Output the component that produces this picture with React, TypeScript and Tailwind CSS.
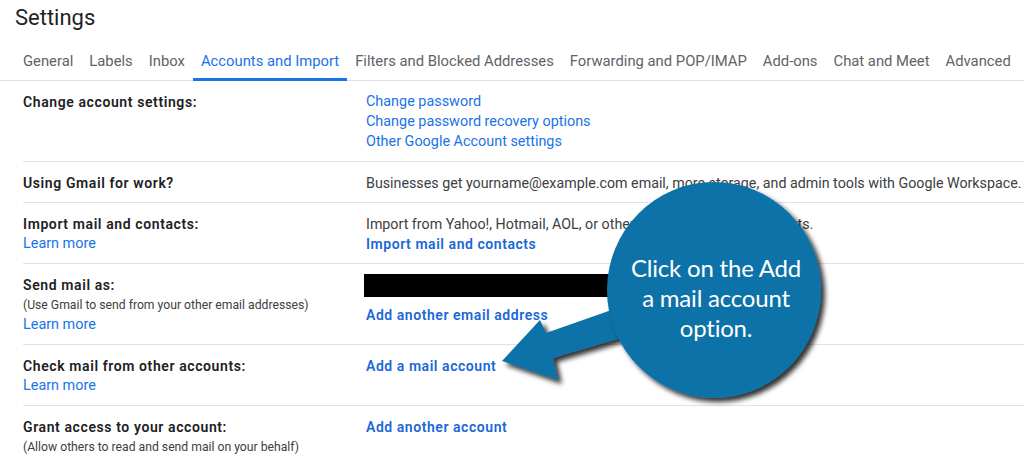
import React from "react";

const tabs = [
  "General",
  "Labels",
  "Inbox",
  "Accounts and Import",
  "Filters and Blocked Addresses",
  "Forwarding and POP/IMAP",
  "Add-ons",
  "Chat and Meet",
  "Advanced",
];

function Row({ left, right }: { left: React.ReactNode; right: React.ReactNode }) {
  return (
    <div className="flex border-b border-[#e3e3e3] pt-[11px] pb-[9px]">
      <div className="w-[343px] shrink-0">{left}</div>
      <div className="flex-1">{right}</div>
    </div>
  );
}

const label = "text-[14px] leading-5 font-semibold tracking-[0.6px] text-[#202124]";
const link = "block text-[14.4px] leading-5 text-[#1a73e8]";
const boldLink = "block text-[14px] leading-5 font-semibold tracking-[0.55px] text-[#1a67d8]";
const small = "text-[12.2px] leading-5 text-[#3c4043]";
const body = "text-[14.25px] leading-5 text-[#3c4043]";

export default function App() {
  return (
    <div className="relative w-[1024px] h-[456px] overflow-hidden bg-white font-['Roboto','Liberation_Sans',sans-serif]">
      <h1 className="pl-[15px] pt-1 text-[22px] leading-[28px] text-[#1f1f1f]">Settings</h1>

      {/* Tabs */}
      <div className="mt-[9px] flex border-b border-[#e3e3e3] pl-[15px]">
        {tabs.map((t) => (
          <div
            key={t}
            className={`-mb-px px-2 pt-[10px] pb-[7px] text-[14.8px] leading-5 border-b-[3px] ${
              t === "Accounts and Import" ? "border-[#1a73e8] text-[#1a73e8]" : "border-transparent text-[#5f6368]"
            }`}
          >
            {t}
          </div>
        ))}
      </div>

      {/* Settings rows */}
      <div className="pl-[23px]">
        <Row
          left={<div className={label}>Change account settings:</div>}
          right={
            <>
              <span className={link}>Change password</span>
              <span className={link}>Change password recovery options</span>
              <span className={link}>Other Google Account settings</span>
            </>
          }
        />
        <Row
          left={<div className={label}>Using Gmail for work?</div>}
          right={
            <div className={body}>
              Businesses get yourname@example.com email, more storage, and admin tools with Google Workspace.
            </div>
          }
        />
        <Row
          left={
            <>
              <div className={label}>Import mail and contacts:</div>
              <span className={link}>Learn more</span>
            </>
          }
          right={
            <>
              <div className={body}>Import from Yahoo!, Hotmail, AOL, or other webmail or POP3 accounts.</div>
              <span className={boldLink}>Import mail and contacts</span>
            </>
          }
        />
        <Row
          left={
            <>
              <div className={label}>Send mail as:</div>
              <div className={small}>(Use Gmail to send from your other email addresses)</div>
              <span className={link}>Learn more</span>
            </>
          }
          right={
            <>
              <div className="-ml-[2px] -mt-px h-[23px] w-[270px] bg-black" />
              <span className={`${boldLink} mt-[8px]`}>Add another email address</span>
            </>
          }
        />
        <Row
          left={
            <>
              <div className={label}>Check mail from other accounts:</div>
              <span className={link}>Learn more</span>
            </>
          }
          right={<span className={boldLink}>Add a mail account</span>}
        />
        <Row
          left={
            <>
              <div className={label}>Grant access to your account:</div>
              <div className={small}>(Allow others to read and send mail on your behalf)</div>
            </>
          }
          right={<span className={boldLink}>Add another account</span>}
        />
      </div>

      {/* Callout overlay */}
      <svg className="pointer-events-none absolute left-0 top-0" width="1024" height="456" viewBox="0 0 1024 456">
        <defs>
          <filter id="shadow" x="-20%" y="-20%" width="140%" height="140%">
            <feDropShadow dx="4" dy="4" stdDeviation="2.5" floodColor="#000" floodOpacity="0.8" />
          </filter>
        </defs>
        <polygon
          points="502,361 540,320 546,333 640,300 648,330 553,358 558,380"
          fill="#0b72a8"
          filter="url(#shadow)"
        />
        <ellipse cx="714" cy="290" rx="107" ry="108" fill="#0b72a8" filter="url(#shadow)" />
      </svg>
      <div className="pointer-events-none absolute left-[610px] top-[253px] w-[212px] text-center font-['Lato','Open_Sans',sans-serif] text-[24px] leading-[30px] tracking-[-0.2px] text-white">
        Click on the Add
        <br />a mail account
        <br />
        option.
      </div>
    </div>
  );
}
